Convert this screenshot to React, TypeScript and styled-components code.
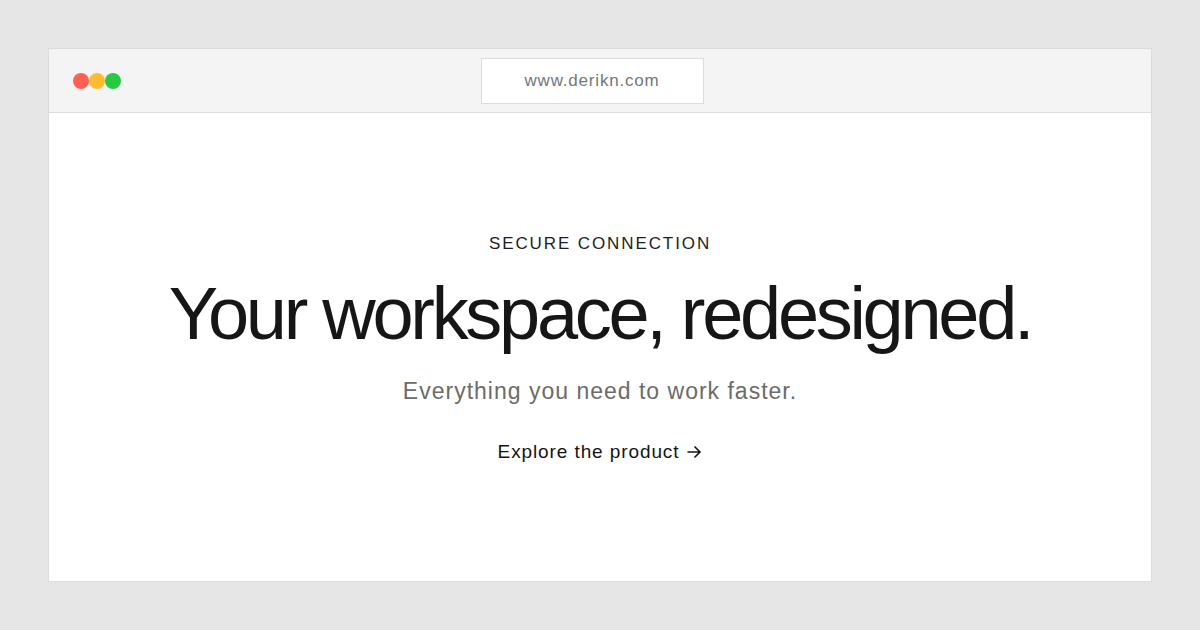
import React from 'react'
import styled, { createGlobalStyle } from 'styled-components'

const GlobalStyle = createGlobalStyle`
    html, body {
        margin: 0;
        padding: 0;
        background: #e6e6e6;
    }
    body {
        font-family: "Liberation Sans", Arial, sans-serif;
        -webkit-font-smoothing: antialiased;
    }
`

const Page = styled.div`
    box-sizing: border-box;
    width: 1200px;
    height: 630px;
    padding: 48px;
`

const Window = styled.div`
    box-sizing: border-box;
    height: 534px;
    border: 1px solid #dcdcdc;
    background: #fff;
    display: flex;
    flex-direction: column;
`

const TitleBar = styled.div`
    box-sizing: border-box;
    height: 64px;
    background: #f4f4f4;
    border-bottom: 1px solid #dcdcdc;
    display: grid;
    grid-template-columns: 1fr 223px 1fr;
    align-items: center;
    padding: 0 24px;
`

const Dots = styled.div`
    display: flex;
`

const Dot = styled.span<{ color: string }>`
    width: 16px;
    height: 16px;
    border-radius: 50%;
    background: ${props => props.color};
`

const UrlBar = styled.div`
    box-sizing: border-box;
    width: 223px;
    height: 46px;
    margin-left: -8px;
    border: 1px solid #dcdcdc;
    background: #fff;
    display: flex;
    align-items: center;
    justify-content: center;
    font-size: 17px;
    letter-spacing: 0.8px;
    color: #767676;
`

const Hero = styled.main`
    flex: 1;
    display: flex;
    flex-direction: column;
    align-items: center;
    justify-content: center;
    text-align: center;
    padding-top: 3px;
`

const Eyebrow = styled.div`
    font-size: 17px;
    letter-spacing: 1.9px;
    color: #1e1e1e;
    line-height: 20px;
`

const Headline = styled.h1`
    margin: 20px 0 0;
    font-size: 74px;
    font-weight: 400;
    letter-spacing: -3.3px;
    line-height: 80px;
    color: #161616;
`

const Subtitle = styled.p`
    margin: 23px 0 0;
    font-size: 23px;
    letter-spacing: 1px;
    line-height: 28px;
    color: #6b6b6b;
`

const CtaLink = styled.a`
    margin-top: 35px;
    display: flex;
    align-items: center;
    gap: 7px;
    font-size: 19px;
    letter-spacing: 0.9px;
    line-height: 24px;
    color: #141414;
    text-decoration: none;
`

const Arrow = styled.svg`
    width: 16px;
    height: 14px;
    margin-top: 1px;
`

export default function App() {
    return (
        <>
            <GlobalStyle />
            <Page>
                <Window>
                    <TitleBar>
                        <Dots>
                            <Dot color="#ff5f57" />
                            <Dot color="#febc2e" />
                            <Dot color="#28c840" />
                        </Dots>
                        <UrlBar>www.derikn.com</UrlBar>
                        <div />
                    </TitleBar>
                    <Hero>
                        <Eyebrow>SECURE CONNECTION</Eyebrow>
                        <Headline>Your workspace, redesigned.</Headline>
                        <Subtitle>Everything you need to work faster.</Subtitle>
                        <CtaLink href="#">
                            Explore the product
                            <Arrow viewBox="0 0 16 14" fill="none" stroke="#141414" strokeWidth="1.6">
                                <path d="M1.5 7h12.5M8.5 1.5 14 7l-5.5 5.5" />
                            </Arrow>
                        </CtaLink>
                    </Hero>
                </Window>
            </Page>
        </>
    )
}
